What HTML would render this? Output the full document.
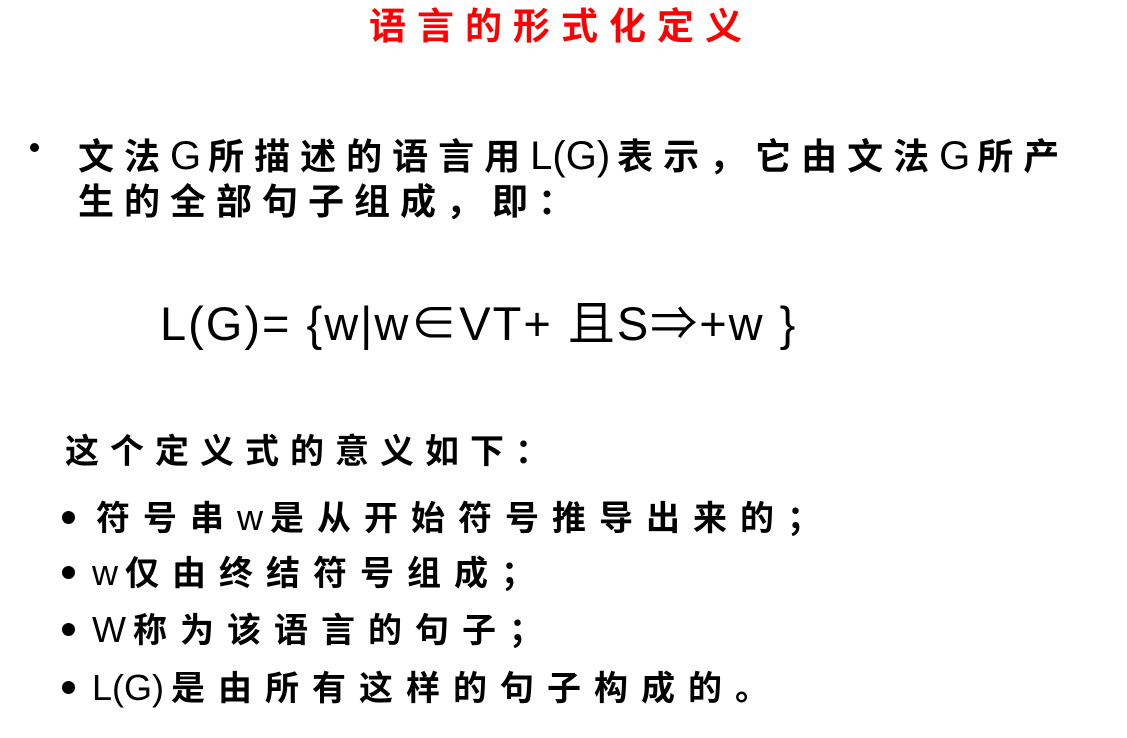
<!DOCTYPE html>
<html><head><meta charset="utf-8"><style>
body{margin:0;width:1127px;height:738px;background:#fff;position:relative;overflow:hidden;font-family:"Liberation Sans","Noto Sans CJK SC",sans-serif;font-weight:bold;color:#000}
.l{position:absolute;white-space:nowrap;line-height:1}
.t{left:369px;top:8px;font-size:37px;color:#f00;letter-spacing:11px}
.a{font-size:36px;letter-spacing:10px}
.b{font-size:34px;letter-spacing:13px}
.e{font-weight:normal;font-size:40px;letter-spacing:0;margin-right:7px}
.d{position:absolute;width:13px;height:13px;border-radius:50%;background:#000}
</style></head><body>
<div class="l t">语言的形式化定义</div>
<div class="d" style="left:30px;top:143px;width:9px;height:9px"></div>
<div class="l a" style="left:78px;top:136px">文法<span class="e">G</span>所描述的语言用<span class="e">L(G)</span>表示，它由文法<span class="e">G</span>所产</div>
<div class="l a" style="left:78px;top:184px">生的全部句子组成，即：</div>
<div class="l" style="left:160px;top:300px;font-size:47px;font-weight:normal;letter-spacing:2px">L(G)= {w|w∈VT+ 且S⇒+w }</div>
<div class="l b" style="left:65px;top:435px;letter-spacing:11px">这个定义式的意义如下：</div>
<div class="d" style="left:62px;top:511px"></div>
<div class="l b" style="left:96px;top:500px">符号串<span class="e" style="font-size:36px">w</span>是从开始符号推导出来的；</div>
<div class="d" style="left:62px;top:566px"></div>
<div class="l b" style="left:92px;top:555px"><span class="e" style="font-size:36px">w</span>仅由终结符号组成；</div>
<div class="d" style="left:62px;top:623px"></div>
<div class="l b" style="left:92px;top:612px"><span class="e" style="font-size:36px">W</span>称为该语言的句子；</div>
<div class="d" style="left:62px;top:681px"></div>
<div class="l b" style="left:92px;top:670px"><span class="e" style="font-size:36px">L(G)</span>是由所有这样的句子构成的。</div>
</body></html>
